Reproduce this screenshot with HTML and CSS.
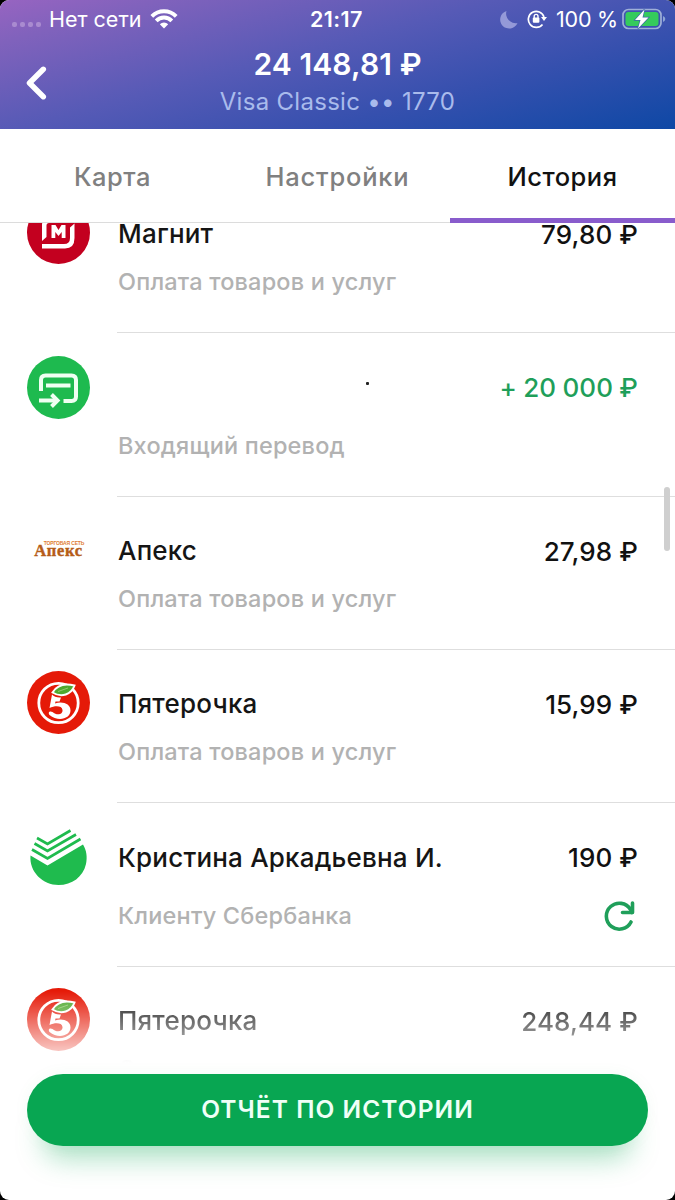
FILE: index.html
```html
<!DOCTYPE html>
<html lang="ru">
<head>
<meta charset="utf-8">
<title>История</title>
<link rel="stylesheet" href="styles.css">
</head>
<body>
<svg class="defs" width="0" height="0" aria-hidden="true">
  <symbol id="five" viewBox="0 0 63 63">
    <circle cx="31.5" cy="31.5" r="31.5" fill="#e51a08"/>
    <circle cx="31.500" cy="32" r="19.700" fill="none" stroke="#fff" stroke-width="2.800"/>
    <path d="M25 23.500Q28 27 34 26.500L32.500 30.500H28.500L28 32.500C36 30 43.500 33 43.500 39.500C43.500 48 31 51 22.500 44C20.500 41 23 39.500 25.500 41C30 45 36 43.500 35.500 39C35 34.500 28 34.500 22.500 37Z" fill="#fff"/>
    <path d="M25.500 21.500C30 14 38 12 47.500 14.500C44.500 23.500 34.500 27 25.500 21.500Z" fill="#4fa82e" stroke="#fff" stroke-width="2"/>
    <path d="M31 20.500L41 17" stroke="#8fca6c" stroke-width="1"/>
  </symbol>
</svg>
<div class="screen">
  <header class="header">
    <div class="status">
      <div class="status-left">
        <span class="signal"><i></i><i></i><i></i><i></i></span>
        <span class="carrier">Нет сети</span>
        <svg class="wifi" width="28" height="20" viewBox="0 0 28 20" fill="none" stroke="#fff" stroke-width="3.900">
          <path d="M1.800 7.300A17.300 17.300 0 0 1 26.200 7.300"/>
          <path d="M6.200 11.800A11 11 0 0 1 21.800 11.800"/>
          <path d="M9.800 15.300A6 6 0 0 1 18.200 15.300L14 19.500Z" fill="#fff" stroke="none"/>
        </svg>
      </div>
      <span class="clock">21:17</span>
      <div class="status-right">
        <svg class="moon" width="18" height="19" viewBox="0 0 18 19"><path d="M6.500 1A9 9 0 1 0 17.500 13A9.500 9.500 0 0 1 6.500 1Z" fill="#9499d8"/></svg>
        <svg class="lock" width="20" height="20" viewBox="0 0 20 20" fill="none" stroke="#fff" stroke-width="1.700">
          <path d="M15.500 15.500A8 8 0 1 1 17 8"/><path d="M14 8H20L17 12Z" fill="#fff" stroke="none"/>
          <rect x="5.800" y="8.600" width="6.600" height="5.200" rx="1" fill="#fff" stroke="none"/><path d="M7.200 9V7.300A1.900 1.900 0 0 1 11 7.300V9" stroke-width="1.400"/>
        </svg>
        <span class="percent">100 %</span>
        <svg class="battery" width="44" height="22" viewBox="0 0 44 22">
          <rect x="1" y="1.500" width="38" height="19" rx="5.500" fill="none" stroke="#9fb0d8" stroke-width="1.700"/>
          <rect x="3.500" y="4" width="33" height="14" rx="3" fill="#35cb5c"/>
          <path d="M41 8Q43.300 9 43.300 11Q43.300 13 41 14Z" fill="#8ea7d6"/>
          <path d="M22.500 1.500L13 12H18.500L16 20.500L26.500 9.500H20.500Z" fill="#fff" stroke="#3d69a8" stroke-width="1.400" paint-order="stroke"/>
        </svg>
      </div>
    </div>
    <div class="account">
      <svg class="back" width="21" height="34" viewBox="0 0 21 34"><path d="M17.300 3.300L3.500 17L17.300 30.700" fill="none" stroke="#fff" stroke-width="5.500" stroke-linecap="round" stroke-linejoin="round"/></svg>
      <div class="balance">24 148,81 ₽</div>
      <div class="card">Visa Classic •• 1770</div>
    </div>
  </header>
  <nav class="tabs">
    <span class="tab">Карта</span>
    <span class="tab wide">Настройки</span>
    <span class="tab active">История</span>
  </nav>
  <main class="viewport">
    <div class="list">
      <div class="row">
        <svg class="logo" width="63" height="63" viewBox="0 0 63 63"><circle cx="31.500" cy="31.500" r="31.500" fill="#c3001f"/><path d="M15 40V24Q15 18 21 18H42V22H22Q19.500 22 19.500 24.500V36Z" fill="#fff"/><path d="M47.500 22.500V37Q47.500 47.500 38 47.500H15V43H37Q43 43 43 37V26.500Z" fill="#fff"/><path d="M24.500 37V24H28.500L31.500 29L34.500 24H38.500V37H34.700V31L31.500 35L28.300 31V37Z" fill="#fff"/></svg>
        <div class="body"><div class="line"><span class="name">Магнит</span><span class="sum">79,80 ₽</span></div><div class="note">Оплата товаров и услуг</div></div>
      </div>
      <div class="row tall">
        <svg class="logo" width="63" height="63" viewBox="0 0 63 63"><circle cx="31.500" cy="31.500" r="31.500" fill="#1eba4f"/><g fill="none" stroke="#effff2" stroke-width="4"><path d="M14 35V24Q14 19.500 18.500 19.500H44.500Q49 19.500 49 24V40.500Q49 45 44.500 45H36.500"/><path d="M19 29.500H43.500M12 44.500H29"/><path d="M24.500 38.500L30.500 44.500L24.500 50.500"/></g></svg>
        <div class="body"><div class="line"><span class="name speck"></span><span class="sum income">+ 20 000 ₽</span></div><div class="note incoming">Входящий перевод</div></div>
      </div>
      <div class="row">
        <div class="logo apex"><span class="apex-top">ТОРГОВАЯ СЕТЬ</span><span class="apex-name">Апекс</span></div>
        <div class="body"><div class="line"><span class="name">Апекс</span><span class="sum">27,98 ₽</span></div><div class="note">Оплата товаров и услуг</div></div>
      </div>
      <div class="row">
        <svg class="logo" width="63" height="63"><use href="#five"/></svg>
        <div class="body"><div class="line"><span class="name">Пятерочка</span><span class="sum">15,99 ₽</span></div><div class="note">Оплата товаров и услуг</div></div>
      </div>
      <div class="row tall">
        <svg class="logo" width="63" height="63" viewBox="0 0 63 63">
          <path d="M3.500 29.500L20.500 39.500L56 18.500C59.500 24 60.500 31 59 38C56 51 45 59 31.500 59C16 59 2 46 3.500 29.500Z" fill="#1fbb4e"/>
          <g fill="none" stroke="#1fbb4e" stroke-width="2.700"><path d="M10 12L20.500 18L43.500 4.500"/><path d="M7.500 17.500L20.500 25L49 8.500"/><path d="M5 23.500L20.500 32.500L53.500 13"/></g>
        </svg>
        <div class="body"><div class="line"><span class="name person">Кристина Аркадьевна И.</span><span class="sum">190 ₽</span></div><div class="line second"><span class="note client">Клиенту Сбербанка</span>
          <svg class="repeat" width="32" height="32" viewBox="0 0 32 32" fill="none" stroke="#1f9f5a" stroke-width="3.600" stroke-linecap="round" stroke-linejoin="round"><path d="M28 22A13 13 0 1 1 27.500 9.500L29 12.500"/><path d="M29.500 3V12.500H19.500"/></svg></div></div>
      </div>
      <div class="row last">
        <svg class="logo" width="63" height="63"><use href="#five"/></svg>
        <div class="body"><div class="line"><span class="name">Пятерочка</span><span class="sum">248,44 ₽</span></div><div class="note">Оплата товаров и услуг</div></div>
      </div>
    </div>
  </main>
  <div class="scrollbar"></div>
  <footer class="footer"><button class="report">ОТЧЁТ ПО ИСТОРИИ</button></footer>
</div>
</body>
</html>
```

FILE: styles.css
```css
* { box-sizing: border-box; }
body { margin: 0; background: #000; font-family: Inter, "Noto Sans", sans-serif; }
.defs { position: absolute; }
.screen { position: relative; width: 675px; height: 1200px; overflow: hidden; border-radius: 9px; background: #fff; display: flex; flex-direction: column; }
.header { height: 129px; flex: none; color: #fff; background: linear-gradient(165deg, #9764c1 0%, #8062bc 14%, #565ab6 43%, #3650ae 69%, #0e48a5 100%); }
.status { height: 38px; display: grid; grid-template-columns: 1fr auto 1fr; align-items: center; font-size: 21.500px; line-height: 37px; }
.status-left { display: flex; align-items: center; padding-left: 12px; }
.signal { display: flex; gap: 3px; margin-right: 8px; padding-top: 10px; }
.signal i { width: 5px; height: 5px; border-radius: 2px; background: #a98bd0; }
.carrier { letter-spacing: 0; }
.wifi { margin-left: 9px; }
.clock { font-weight: 600; font-size: 21.500px; letter-spacing: 0.400px; margin-right: 2px; }
.status-right { display: flex; align-items: center; justify-content: flex-end; padding-right: 9px; }
.lock { margin: 0 9px 0 9px; }
.percent { letter-spacing: -0.200px; }
.battery { margin-left: 4px; }
.account { height: 91px; display: grid; grid-template-columns: 47px 1fr 47px; grid-template-rows: 54px 37px; text-align: center; }
.back { grid-column: 1; grid-row: 1 / 3; margin: 28px 0 0 26px; }
.balance { grid-column: 2; font-size: 30px; font-weight: 600; line-height: 53px; letter-spacing: 0.100px; }
.card { grid-column: 2; font-size: 24px; line-height: 19px; color: #a9bbec; letter-spacing: 0.300px; }
.tabs { flex: none; height: 94px; display: grid; grid-template-columns: repeat(3, 1fr); border-bottom: 1px solid #dcdcdc; }
.tab { text-align: center; font-size: 25.500px; line-height: 95px; height: 94px; color: #808080; letter-spacing: 0.500px; font-weight: 450; }
.tab.wide { letter-spacing: 0.800px; }
.tab.active { color: #111; font-weight: 500; border-bottom: 5px solid #895ccc; }
.viewport { height: 852px; overflow: hidden; flex: none; }
.list { margin-top: -43px; }
.row { display: flex; height: 153px; padding-left: 27px; }
.tall { height: 164px; }
.logo { flex: none; width: 63px; height: 63px; margin: 21px 27px 0 0; }
.tall .logo { margin-top: 23px; }
.body { flex: 1; border-bottom: 1px solid #dedede; padding: 39px 37px 0 1px; }
.tall .body { padding-top: 40px; }
.line { display: flex; justify-content: space-between; height: 30px; line-height: 30px; font-size: 26px; }
.name { color: #151515; letter-spacing: 0.200px; font-weight: 450; }
.sum { color: #111; font-weight: 450; line-height: 31px; letter-spacing: 0.100px; }
.tall .sum { line-height: 29px; }
.sum.income { color: #1f9f5a; word-spacing: -0.800px; }
.note { font-size: 23.500px; line-height: 30px; margin-top: 18px; color: #b2b2b2; font-weight: 500; letter-spacing: 0.180px; }
.tall .note { margin-top: 28px; }
.tall .second { margin-top: 19px; height: 40px; align-items: center; }
.tall .second .note { margin: 8px 0 0; }
.repeat { margin: 7px 3px 0 0; }
.speck::after { content: ""; display: block; width: 3px; height: 3px; margin: 9px 0 0 248px; border-radius: 1px; background: #222; }
.apex { display: flex; flex-direction: column; align-items: center; font-family: "Liberation Serif", serif; font-weight: 700; color: #b55c18; padding-top: 22px; }
.apex-top { font: 700 5px/6px "Liberation Sans", sans-serif; color: #e07c32; margin-left: 11px; letter-spacing: -0.150px; white-space: nowrap; }
.apex-name { font-size: 16.500px; line-height: 10px; letter-spacing: 0.700px; -webkit-text-stroke: 0.400px #b55c18; }
.last { -webkit-mask-image: linear-gradient(to bottom, #000 24px, rgba(0,0,0,.25) 84px, transparent 96px); mask-image: linear-gradient(to bottom, #000 24px, rgba(0,0,0,.25) 84px, transparent 96px); }
.scrollbar { position: absolute; right: 5px; top: 487px; width: 6px; height: 64px; border-radius: 3px; background: #cfcfcf; }
.footer { height: 125px; flex: none; padding: 0 27px; }
.report { display: block; width: 100%; height: 72px; margin-top: -1px; padding: 0 0 2px; border: 0; border-radius: 36px; background: #08a652; color: #effff7; font: 600 24.500px/70px Inter, sans-serif; letter-spacing: 1.050px; box-shadow: 0 28px 28px -16px rgba(8, 166, 82, 0.350), 0 0 16px rgba(8, 166, 82, 0.050); }
```
